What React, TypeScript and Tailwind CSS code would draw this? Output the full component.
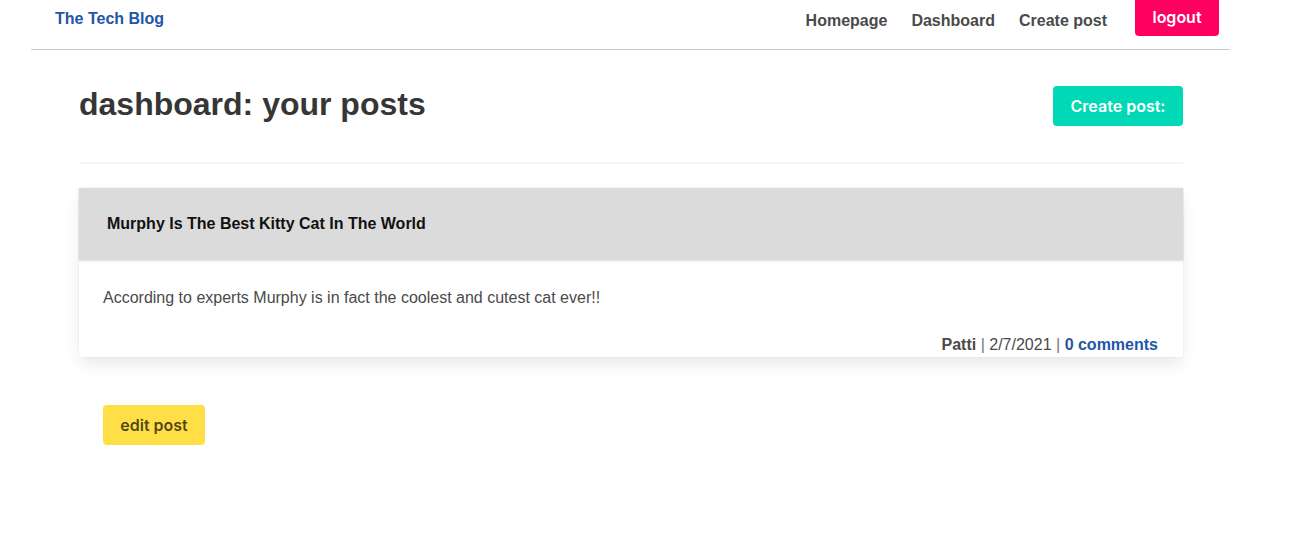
import React from 'react';

const sans = { fontFamily: '"Liberation Sans", Arial, sans-serif' };

const Navbar: React.FC = () => (
  <nav className="mx-[31px] flex h-[50px] w-[1199px] items-start justify-between border-b border-[#cccccc]">
    <a href="#" className="mt-[7px] ml-[24px] text-base font-bold text-[#1f56a8]">
      The Tech Blog
    </a>
    <div className="flex items-start">
      <a href="#" className="mt-[9px] mr-[24px] text-base font-bold text-[#4a4a4a]">Homepage</a>
      <a href="#" className="mt-[9px] mr-[24px] text-base font-bold text-[#4a4a4a]">Dashboard</a>
      <a href="#" className="mt-[9px] mr-[28px] text-base font-bold text-[#4a4a4a]">Create post</a>
      <button
        className="mr-[11px] h-[36px] w-[84px] rounded-b-[4px] bg-[#ff0060] pb-[2px] text-base font-semibold text-white"
        style={{ fontFamily: 'Inter, "Noto Sans", sans-serif' }}
      >
        logout
      </button>
    </div>
  </nav>
);

const PostCard: React.FC = () => (
  <div className="mt-[24px] rounded-[2px] bg-white shadow-[0_8px_16px_-2px_rgba(10,10,10,0.1),0_0_0_1px_rgba(10,10,10,0.02)]">
    <div className="flex h-[72px] items-center bg-[#dbdbdb] px-[28px] shadow-[0_1px_2px_rgba(10,10,10,0.15)]">
      <h2 className="text-base font-bold text-[#111111]">Murphy Is The Best Kitty Cat In The World</h2>
    </div>
    <div className="px-[24px] pt-[26px] text-base text-[#4a4a4a]">
      According to experts Murphy is in fact the coolest and cutest cat ever!!
    </div>
    <div className="pr-[25px] pt-[23px] text-right text-base text-[#4a4a4a]">
      <span className="font-bold">Patti</span> <span className="text-[#777777]">|</span> 2/7/2021{' '}
      <span className="text-[#777777]">|</span>{' '}
      <a href="#" className="font-bold text-[#1f56a8]">0 comments</a>
    </div>
  </div>
);

export default function App() {
  return (
    <div className="min-h-screen bg-white" style={sans}>
      <Navbar />
      <main className="mx-[79px] w-[1104px]">
        <div className="flex items-start justify-between pt-[34px]">
          <h1 className="text-[32px] leading-[40px] font-bold text-[#363636]">dashboard: your posts</h1>
          <button
            className="mt-[2px] h-[40px] w-[130px] rounded-[4px] bg-[#00d8b6] text-base font-semibold text-white"
            style={{ fontFamily: 'Inter, "Noto Sans", sans-serif' }}
          >
            Create post:
          </button>
        </div>
        <hr className="mt-[36px] h-[2px] border-0 bg-[#f5f5f5]" />
        <PostCard />
        <div className="px-[24px] pt-[48px]">
          <button
            className="h-[40px] w-[102px] rounded-[4px] bg-[#ffdf45] text-base font-semibold text-black/70"
            style={{ fontFamily: 'Inter, "Noto Sans", sans-serif' }}
          >
            edit post
          </button>
        </div>
      </main>
    </div>
  );
}
